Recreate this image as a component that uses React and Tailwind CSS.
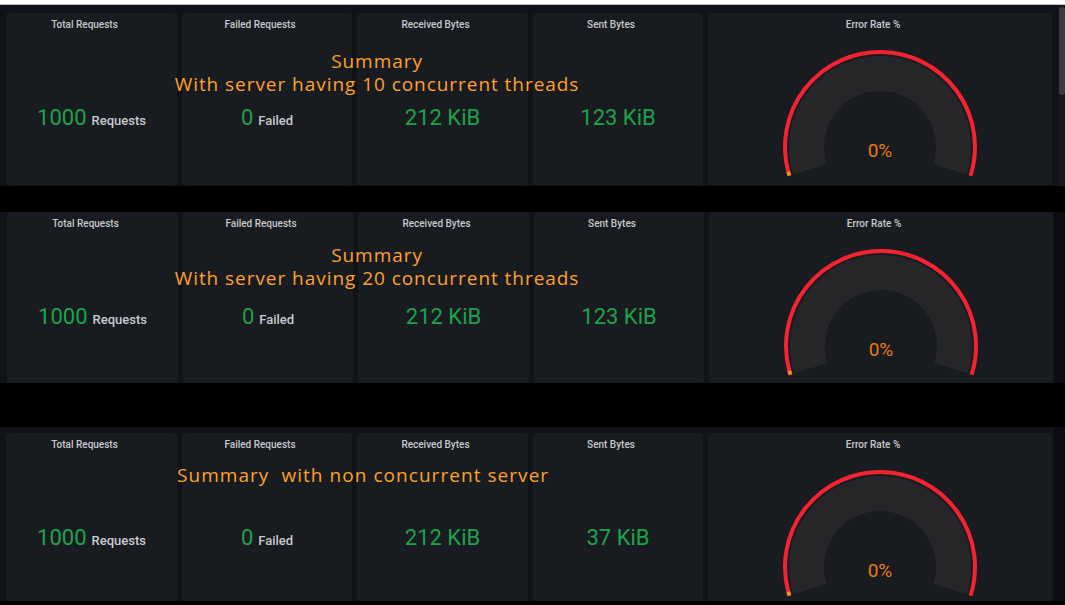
import React from "react";

const GREEN = "text-[#1ca34a]";

function Title({ children }) {
  return (
    <div className="h-[22px] pt-[6px] pr-[14px] text-center text-[10px] leading-[12px] font-medium text-[#c7c8d0]">
      {children}
    </div>
  );
}

function StatPanel({ title, value, unit, width }) {
  return (
    <div className={`${width} h-[172px] shrink-0 rounded-[3px] bg-[#181b1f] flex flex-col`}>
      <Title>{title}</Title>
      <div className="mt-[69px] h-[28px] flex items-baseline justify-center">
        <span className={`text-[22px] leading-[28px] ${GREEN}`}>{value}</span>
        {unit && (
          <span className="ml-[5px] text-[13px] font-medium text-[#c9cad1]">{unit}</span>
        )}
      </div>
    </div>
  );
}

function Gauge() {
  return (
    <div className="w-[344px] h-[172px] shrink-0 rounded-[3px] bg-[#181b1f] flex flex-col items-center">
      <div className="w-full">
        <Title>Error Rate %</Title>
      </div>
      <svg width="200" height="136" viewBox="0 0 200 136" className="mt-[12px]">
        <path
          d="M 13.26 127.52 A 91 91 0 1 1 186.74 127.52 L 153.38 116.93 A 56 56 0 1 0 46.62 116.93 Z"
          fill="#262628"
        />
        <path
          d="M 8.24 124.59 A 95 95 0 1 1 190.55 128.73"
          fill="none"
          stroke="#f5222f"
          strokeWidth="4"
        />
        <path
          d="M 9.45 128.73 A 95 95 0 0 1 8.24 124.59"
          fill="none"
          stroke="#ff8a1a"
          strokeWidth="4"
        />
        <text
          x="100"
          y="110"
          textAnchor="middle"
          fontSize="19"
          fill="#eb7b18"
          fontFamily="Roboto, sans-serif"
        >
          0%
        </text>
      </svg>
    </div>
  );
}

function Row({ sent }) {
  return (
    <div className="flex gap-[5px]">
      <StatPanel title="Total Requests" value="1000" unit="Requests" width="w-[171px]" />
      <StatPanel title="Failed Requests" value="0" unit="Failed" width="w-[170px]" />
      <StatPanel title="Received Bytes" value="212 KiB" width="w-[171px]" />
      <StatPanel title="Sent Bytes" value={sent} width="w-[170px]" />
      <Gauge />
    </div>
  );
}

const overlayFont = { fontFamily: '"Open Sans", "Noto Sans", sans-serif' };

export default function App() {
  return (
    <div className="w-[1065px] h-[605px] overflow-hidden bg-black" style={{ fontFamily: "Roboto, 'Liberation Sans', sans-serif" }}>
      <div className="h-[4px] bg-white" />
      <div className="h-[1px] bg-[#bfc0c2]" />

      {/* Section 1 */}
      <div className="relative h-[181px] bg-[#111217] pt-[8px] pl-[6px] overflow-hidden">
        <Row sent="123 KiB" />
        <div className="absolute right-0 top-0 w-[6px] h-full bg-[#17181c]" />
        <div className="absolute right-0 top-[2px] w-[6px] h-[88px] rounded-[3px] bg-[#3b3c42]" />
        <div
          className="absolute left-[377px] top-[45px] -translate-x-1/2 whitespace-nowrap text-center text-[19px] leading-[23px] tracking-[0.95px] text-[#ffa12e]"
          style={overlayFont}
        >
          <div>Summary</div>
          <div>With server having 10 concurrent threads</div>
        </div>
      </div>

      <div className="h-[26px]" />

      {/* Section 2 */}
      <div className="relative h-[171px] bg-[#111217] pl-[7px] overflow-hidden">
        <Row sent="123 KiB" />
        <div className="absolute right-0 top-0 w-[11px] h-full bg-[#0c0d10]" />
        <div
          className="absolute left-[377px] top-[32px] -translate-x-1/2 whitespace-nowrap text-center text-[19px] leading-[23px] tracking-[0.95px] text-[#ffa12e]"
          style={overlayFont}
        >
          <div>Summary</div>
          <div>With server having 20 concurrent threads</div>
        </div>
      </div>

      <div className="h-[44px]" />

      {/* Section 3 */}
      <div className="relative h-[174px] bg-[#111217] pt-[6px] pl-[6px] overflow-hidden">
        <Row sent="37 KiB" />
        <div className="absolute right-0 top-0 w-[11px] h-full bg-[#0c0d10]" />
        <div
          className="absolute left-[177px] top-[37px] whitespace-pre text-[19px] leading-[23px] tracking-[1.05px] text-[#ffa12e]"
          style={overlayFont}
        >
          {"Summary  with non concurrent server"}
        </div>
      </div>
    </div>
  );
}
